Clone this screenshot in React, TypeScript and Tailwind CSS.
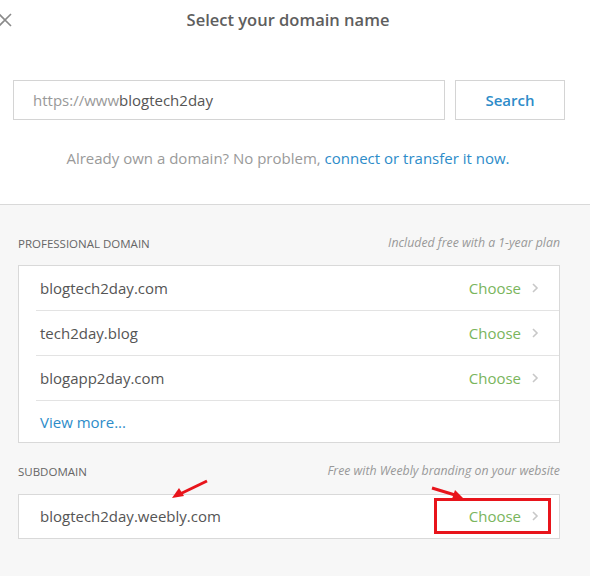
import React from "react";

const Chevron = () => (
  <svg width="8" height="12" viewBox="0 0 8 12" className="ml-[10px]">
    <path d="M2 2 L6 6 L2 10" fill="none" stroke="#c8c8c8" strokeWidth="1.6" />
  </svg>
);

const Row = ({ name, last }: { name: string; last?: boolean }) => (
  <div className={"ml-[17px] flex h-[45px] items-center pr-[20px] " + (last ? "" : "border-b border-[#e3e3e3]")}>
    <span className="flex-1 pl-[4px] text-[15px] text-[#555]">{name}</span>
    <span className="text-[15px] text-[#7ab55c]">Choose</span>
    <Chevron />
  </div>
);

export default function App() {
  return (
    <div
      className="relative h-[576px] w-[590px] overflow-hidden bg-[#f7f7f7]"
      style={{ fontFamily: '"Open Sans", "Liberation Sans", sans-serif' }}
    >
      <div className="h-[205px] border-b border-[#d9d9d9] bg-white">
        <div className="relative flex h-[40px] items-center justify-center pr-[14px]">
          <svg className="absolute left-[-2px] top-[13px]" width="14" height="14" viewBox="0 0 14 14">
            <path d="M1 1 L13 13 M13 1 L1 13" stroke="#8a8a8a" strokeWidth="1.6" />
          </svg>
          <span className="text-[16.5px] font-semibold text-[#5e5e5e]">Select your domain name</span>
        </div>
        <div className="mt-[40px] flex gap-[10px] pl-[13px]">
          <div className="flex h-[40px] w-[432px] items-center border border-[#d4d4d4] pl-[19px] text-[15px]">
            <span className="text-[#999]">https://www</span>
            <span className="text-[#555]">blogtech2day</span>
          </div>
          <div className="flex h-[40px] w-[110px] items-center justify-center border border-[#d4d4d4] text-[15px] font-semibold text-[#2d8cc9]">
            Search
          </div>
        </div>
        <div className="mt-[27px] pr-[14px] text-center text-[15px] text-[#9a9a9a]">
          Already own a domain? No problem, <span className="text-[#2d8cc9]">connect or transfer it now.</span>
        </div>
      </div>

      <div className="px-[18px] pr-[30px]">
        <div className="mt-[29px] flex items-center justify-between">
          <span className="text-[11.5px] text-[#666]">PROFESSIONAL DOMAIN</span>
          <span className="text-[12.3px] italic text-[#999]">Included free with a 1-year plan</span>
        </div>
        <div className="mt-[13px] border border-[#d9d9d9] bg-white">
          <Row name="blogtech2day.com" />
          <Row name="tech2day.blog" />
          <Row name="blogapp2day.com" />
          <div className="flex h-[41px] items-center pl-[21px] text-[15px] text-[#2d8cc9]">View more...</div>
        </div>

        <div className="mt-[19px] flex items-center justify-between">
          <span className="text-[11.5px] text-[#666]">SUBDOMAIN</span>
          <span className="text-[12.3px] italic text-[#999]">Free with Weebly branding on your website</span>
        </div>
        <div className="mt-[13px] flex h-[45px] items-center border border-[#d9d9d9] bg-white pl-[21px] pr-[20px]">
          <span className="flex-1 text-[15px] text-[#555]">blogtech2day.weebly.com</span>
          <span className="text-[15px] text-[#7ab55c]">Choose</span>
          <Chevron />
        </div>
      </div>

      <div className="pointer-events-none absolute left-[434px] top-[498px] h-[36px] w-[117px] border-[3px] border-[#e8141b]" />
      <svg className="pointer-events-none absolute left-0 top-0" width="590" height="576">
        <line x1="207" y1="481" x2="180" y2="494" stroke="#e8141b" strokeWidth="3" />
        <path d="M172 498 L179 488 L184 496 Z" fill="#e8141b" />
        <line x1="432" y1="488" x2="455" y2="495" stroke="#e8141b" strokeWidth="3" />
        <path d="M463 498 L452 499 L455 490 Z" fill="#e8141b" />
      </svg>
    </div>
  );
}
